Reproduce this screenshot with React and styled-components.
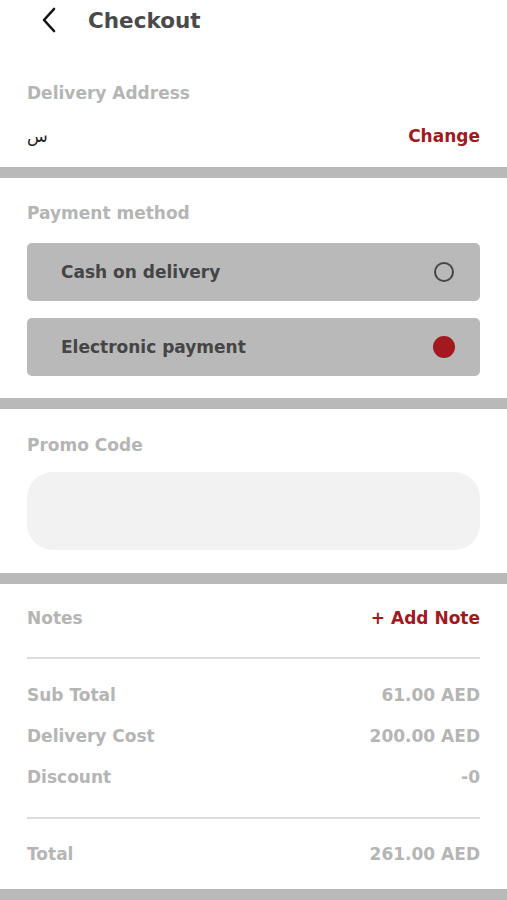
import React from "react";
import styled, { createGlobalStyle } from "styled-components";

const GlobalStyle = createGlobalStyle`
    body {
        margin: 0;
        background: #ffffff;
        font-family: "DejaVu Sans", "Open Sans", sans-serif;
    }
`;

const Page = styled.div`
    width: 507px;
    height: 900px;
    overflow: hidden;
    background: #fff;
`;

const Header = styled.div`
    display: flex;
    align-items: center;
    height: 40px;
    padding-left: 40px;
`;

const Back = styled.div`
    display: flex;
    align-items: center;
    width: 48px;
`;

const Title = styled.h1`
    margin: 0;
    font-size: 21.5px;
    font-weight: 700;
    color: #4a4a4a;
`;

const Section = styled.div`
    padding: ${(p) => p.pad || "0 27px"};
`;

const Band = styled.div`
    height: 11px;
    background: #b9b9b9;
`;

const Label = styled.div`
    font-size: 17px;
    font-weight: 700;
    color: #b5b5b5;
    line-height: 22px;
`;

const Row = styled.div`
    display: flex;
    align-items: center;
    justify-content: space-between;
    height: ${(p) => p.h || "auto"};
`;

const Address = styled.span`
    font-size: 17px;
    color: #222;
`;

const Action = styled.span`
    font-size: 17px;
    font-weight: 700;
    color: #9e1a1f;
`;

const Option = styled.div`
    display: flex;
    align-items: center;
    justify-content: space-between;
    height: 58px;
    padding: 0 25px 0 34px;
    background: #b9b9b9;
    border-radius: 5px;
    font-size: 17px;
    font-weight: 700;
    color: #454545;
`;

const Radio = styled.span`
    width: ${(p) => (p.checked ? "22px" : "20px")};
    height: ${(p) => (p.checked ? "22px" : "20px")};
    border-radius: 50%;
    box-sizing: border-box;
    border: ${(p) => (p.checked ? "none" : "2px solid #454545")};
    background: ${(p) => (p.checked ? "#a3191f" : "transparent")};
    margin-right: ${(p) => (p.checked ? "0" : "1px")};
`;

const Options = styled.div`
    display: flex;
    flex-direction: column;
    gap: 17px;
    margin-top: 19px;
`;

const PromoInput = styled.div`
    height: 78px;
    margin-top: 16px;
    background: #f2f2f2;
    border-radius: 26px;
`;

const Divider = styled.div`
    height: 2px;
    margin-top: ${(p) => p.mt || "0"};
    background: #dcdcdc;
`;

const Amounts = styled.div`
    padding: 15px 0 20px;
`;

const Amount = styled(Row)`
    height: ${(p) => p.h || "41px"};
    font-size: 17px;
    font-weight: 700;
    color: #b5b5b5;
`;

const ChevronLeft = () => (
    <svg width="20" height="26" viewBox="0 0 20 26" fill="none">
        <path d="M14 2 L4 13 L14 24" stroke="#111" strokeWidth="2.6" strokeLinecap="round" strokeLinejoin="round" />
    </svg>
);

const App = () => {
    return (
        <Page>
            <GlobalStyle />
            <Header>
                <Back>
                    <ChevronLeft />
                </Back>
                <Title>Checkout</Title>
            </Header>

            <Section pad="42px 27px 0">
                <Label>Delivery Address</Label>
                <Row h="63px">
                    <Address>س</Address>
                    <Action>Change</Action>
                </Row>
            </Section>
            <Band />

            <Section pad="24px 27px 22px">
                <Label>Payment method</Label>
                <Options>
                    <Option>
                        Cash on delivery
                        <Radio />
                    </Option>
                    <Option>
                        Electronic payment
                        <Radio checked />
                    </Option>
                </Options>
            </Section>
            <Band />

            <Section pad="25px 27px 23px">
                <Label>Promo Code</Label>
                <PromoInput />
            </Section>
            <Band />

            <Section pad="23px 27px 0">
                <Row h="22px">
                    <Label>Notes</Label>
                    <Action>+ Add Note</Action>
                </Row>
                <Divider mt="28px" />
                <Amounts>
                    <Amount>
                        <span>Sub Total</span>
                        <span>61.00 AED</span>
                    </Amount>
                    <Amount>
                        <span>Delivery Cost</span>
                        <span>200.00 AED</span>
                    </Amount>
                    <Amount>
                        <span>Discount</span>
                        <span>-0</span>
                    </Amount>
                </Amounts>
                <Divider />
                <Amount h="70px">
                    <span>Total</span>
                    <span>261.00 AED</span>
                </Amount>
            </Section>
            <Band />
        </Page>
    );
};

export default App;
